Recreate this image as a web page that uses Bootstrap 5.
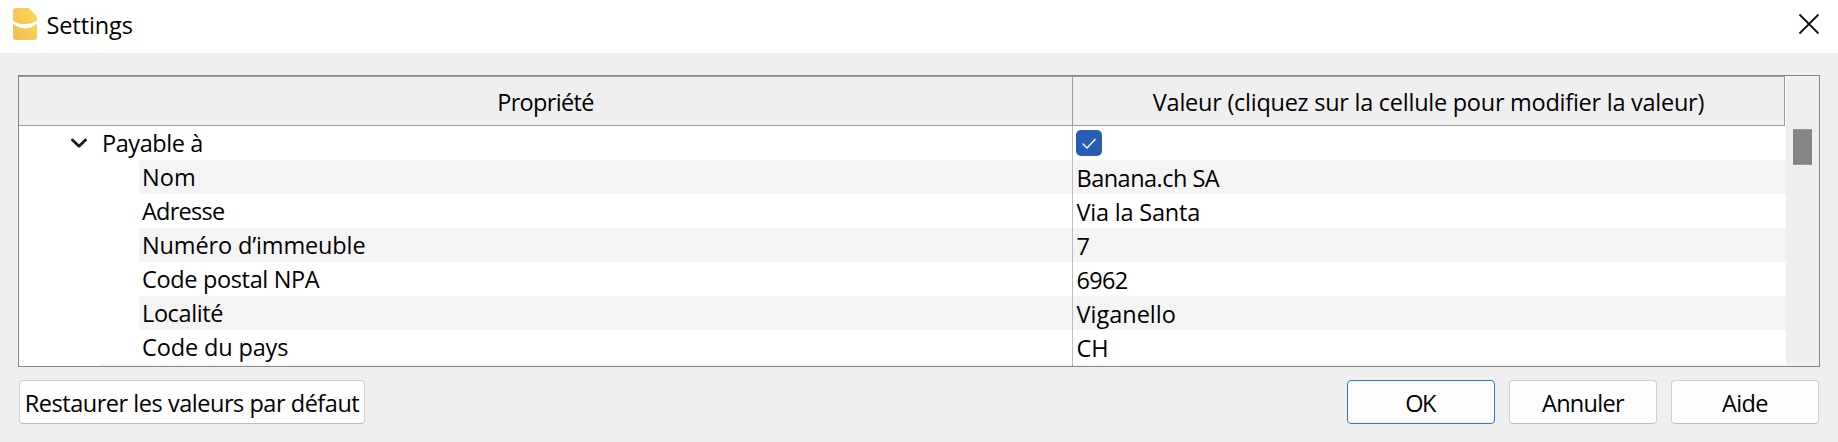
<!DOCTYPE html>
<html lang="fr">
<head>
<meta charset="utf-8">
<title>Settings</title>
<link href="https://cdn.jsdelivr.net/npm/bootstrap@5.3.0/dist/css/bootstrap.min.css" rel="stylesheet">
<style>
body{font-family:"Open Sans","Noto Sans",sans-serif;font-size:23.5px;line-height:34px;color:#000;background:#efefef;height:442px;white-space:nowrap}
.titlebar{height:53px;background:#fff;padding:8px 14px 0 13px}
.titlebar .logo{width:24px;height:32px;margin-right:9.5px}
.titlebar .close-icon{width:22px;height:22px;margin-top:5px;margin-right:4px}
.tree{height:292px;margin:22px 18px 0;border:1px solid #82868f;background:#fff}
.grid-area{width:1767px}
.head-row{width:1766px;height:50px;border:1px solid #9c9c9f;border-left:0;background:#efefef}
.head-row>div{padding-top:2px}
.col-prop{width:1054px;border-right:1px solid #9c9c9f}
.tree-row{height:34px}
.tree-row .col-prop{border-color:#bdbdbd}
.tree-row .leaf{margin-left:120px;padding-left:3px}
.tree-row .col-val{padding:1px 0 0 3.5px}
.tree-row .check-cell{padding:0 0 0 3px}
.striped .leaf,.striped .col-val{background:#f4f4f4}
.next-row{height:2px}
.next-row .branch{margin-left:80px;background:#f4f4f4}
.next-row .col-val{background:#f4f4f4}
.chevron{width:16px;height:11px;margin-left:52px;margin-right:15px}
.tick{width:26px;height:26px;border-radius:5px;background:#275eb4;margin-top:4px}
.scroll-track{width:33px;background:#efefef;padding:53px 0 0 7px}
.scroll-thumb{width:19px;height:36px;background:#858585;border:solid #979797;border-width:1px 0}
.actions{padding:13px 19px 0}
.btn-dlg{width:148px;height:44px;padding:1px 0 0;font-size:23.5px;line-height:34px;color:#000;background:#fdfdfd;border:1px solid #d0d0d0;border-bottom-color:#bababa;border-radius:4px}
.btn-reset{width:346px}
.btn-ok{border-color:#2f75c8;padding-right:2px}
</style>
</head>
<body class="overflow-hidden">
<header class="titlebar d-flex align-items-start">
  <svg class="logo" viewBox="0 0 24 32">
    <defs><linearGradient id="gold" x1="1" y1="0" x2="0" y2="1"><stop offset="0" stop-color="#fbdd4d"/><stop offset="1" stop-color="#f4b95b"/></linearGradient></defs>
    <path fill="url(#gold)" d="M3 0H15.500L24 8.500V29a3 3 0 0 1-3 3H3a3 3 0 0 1-3-3V3a3 3 0 0 1 3-3z"/>
    <path fill="#fff" d="M0 12.700C7 17.500 17 17 24 12.500V15.500C17 22 7 22 0 15.500z"/>
  </svg>
  <span style="letter-spacing:-.11px">Settings</span>
  <svg class="close-icon ms-auto" viewBox="0 0 22 22" fill="none" stroke="#111" stroke-width="1.800"><path d="M1.500 1.500 20.500 20.500M20.500 1.500 1.500 20.500"/></svg>
</header>

<main class="tree d-flex justify-content-between overflow-hidden">
  <div class="grid-area">
    <div class="head-row d-flex text-center">
      <div class="col-prop d-flex align-items-center justify-content-center"><span style="letter-spacing:-.65px">Propriété</span></div>
      <div class="flex-fill d-flex align-items-center justify-content-center"><span style="letter-spacing:-.257px">Valeur (cliquez sur la cellule pour modifier la valeur)</span></div>
    </div>
    <div class="tree-row d-flex">
      <div class="col-prop d-flex">
        <svg class="chevron align-self-center" viewBox="0 0 16 11" fill="none" stroke="#1c1c1c" stroke-width="2.800" stroke-linecap="round" stroke-linejoin="round"><path d="M1.500 2 8 8.300 14.500 2"/></svg>
        <span style="letter-spacing:-.43px">Payable à</span>
      </div>
      <div class="col-val check-cell flex-fill">
        <div class="tick"><svg class="d-block" viewBox="0 0 26 26" fill="none" stroke="#fff" stroke-width="1.300"><path d="M6.500 13.500 11 18 19.500 9"/></svg></div>
      </div>
    </div>
    <div class="tree-row striped d-flex">
      <div class="col-prop"><div class="leaf" style="letter-spacing:.1px">Nom</div></div>
      <div class="col-val flex-fill" style="letter-spacing:-.52px">Banana.ch SA</div>
    </div>
    <div class="tree-row d-flex">
      <div class="col-prop"><div class="leaf" style="letter-spacing:-.76px">Adresse</div></div>
      <div class="col-val flex-fill" style="letter-spacing:-.2px">Via la Santa</div>
    </div>
    <div class="tree-row striped d-flex">
      <div class="col-prop"><div class="leaf" style="letter-spacing:-.14px">Numéro d’immeuble</div></div>
      <div class="col-val flex-fill">7</div>
    </div>
    <div class="tree-row d-flex">
      <div class="col-prop"><div class="leaf" style="letter-spacing:-.34px">Code postal NPA</div></div>
      <div class="col-val flex-fill" style="letter-spacing:-.7px">6962</div>
    </div>
    <div class="tree-row striped d-flex">
      <div class="col-prop"><div class="leaf" style="letter-spacing:-.39px">Localité</div></div>
      <div class="col-val flex-fill" style="letter-spacing:0">Viganello</div>
    </div>
    <div class="tree-row d-flex">
      <div class="col-prop"><div class="leaf" style="letter-spacing:-.14px">Code du pays</div></div>
      <div class="col-val flex-fill" style="letter-spacing:0">CH</div>
    </div>
    <div class="next-row d-flex">
      <div class="col-prop"><div class="branch h-100"></div></div>
      <div class="col-val flex-fill"></div>
    </div>
  </div>
  <div class="scroll-track"><div class="scroll-thumb"></div></div>
</main>

<footer class="actions d-flex">
  <button type="button" class="btn btn-dlg btn-reset me-auto" style="letter-spacing:-.465px">Restaurer les valeurs par défaut</button>
  <div class="d-flex" style="gap:14px">
    <button type="button" class="btn btn-dlg btn-ok" style="letter-spacing:-1.5px">OK</button>
    <button type="button" class="btn btn-dlg" style="letter-spacing:-.68px">Annuler</button>
    <button type="button" class="btn btn-dlg" style="letter-spacing:-.63px">Aide</button>
  </div>
</footer>
<script src="https://cdn.jsdelivr.net/npm/bootstrap@5.3.0/dist/js/bootstrap.bundle.min.js"></script>
</body>
</html>
